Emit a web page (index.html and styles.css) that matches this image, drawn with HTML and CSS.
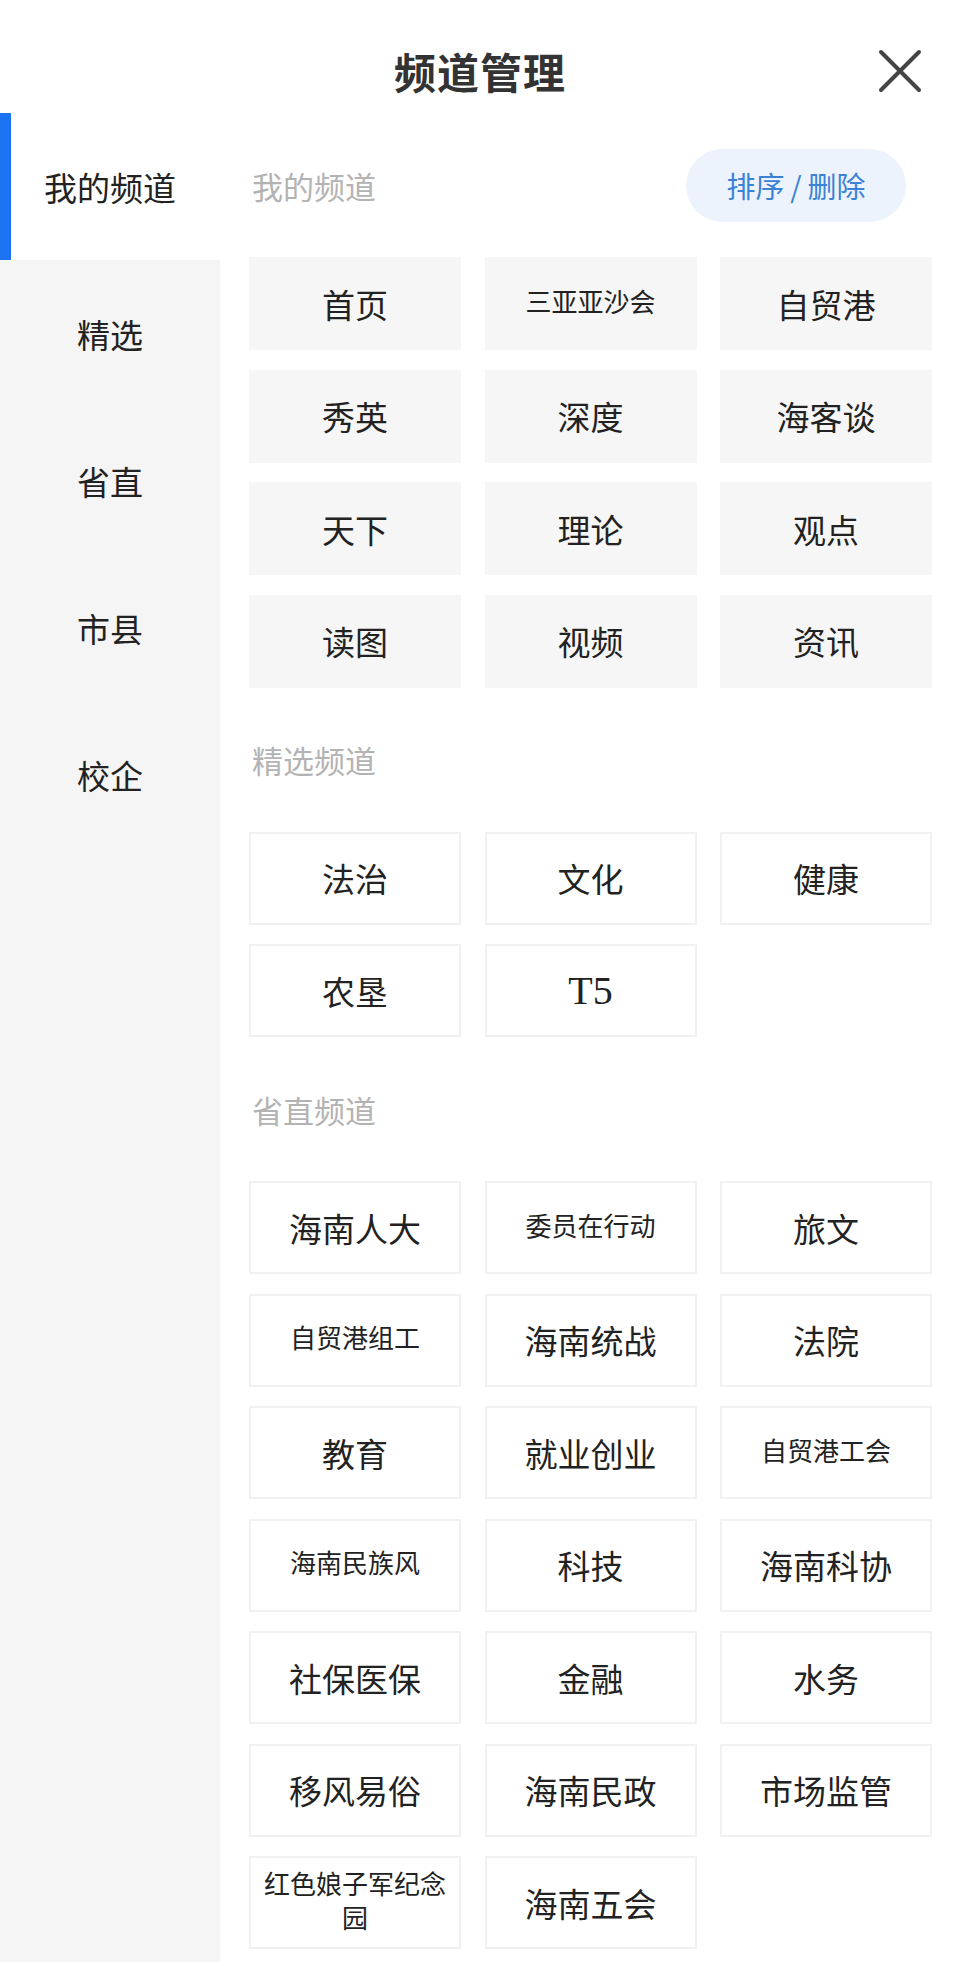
FILE: index.html
```html
<!DOCTYPE html>
<html lang="zh-CN">
<head>
  <meta charset="UTF-8">
  <title>频道管理</title>
  <link rel="stylesheet" href="styles.css">
</head>
<body>
  <header class="topbar">
    <span></span>
    <h1>频道管理</h1>
    <button class="close" aria-label="关闭">
      <svg width="44" height="44" viewBox="0 0 44 44">
        <path d="M3 3 L41 41 M41 3 L3 41" stroke="#444" stroke-width="4" stroke-linecap="round" fill="none"/>
      </svg>
    </button>
  </header>

  <div class="layout">
    <nav class="sidebar">
      <a class="nav-item active">我的频道</a>
      <a class="nav-item">精选</a>
      <a class="nav-item">省直</a>
      <a class="nav-item">市县</a>
      <a class="nav-item">校企</a>
    </nav>

    <main class="content">
      <section>
        <div class="section-head">
          <h2>我的频道</h2>
          <button class="edit-btn">排序&thinsp;/&thinsp;删除</button>
        </div>
        <div class="grid mine">
          <div class="tile">首页</div>
          <div class="tile small">三亚亚沙会</div>
          <div class="tile">自贸港</div>
          <div class="tile">秀英</div>
          <div class="tile">深度</div>
          <div class="tile">海客谈</div>
          <div class="tile">天下</div>
          <div class="tile">理论</div>
          <div class="tile">观点</div>
          <div class="tile">读图</div>
          <div class="tile">视频</div>
          <div class="tile">资讯</div>
        </div>
      </section>

      <section>
        <div class="section-head">
          <h2>精选频道</h2>
        </div>
        <div class="grid">
          <div class="tile">法治</div>
          <div class="tile">文化</div>
          <div class="tile">健康</div>
          <div class="tile">农垦</div>
          <div class="tile latin">T5</div>
        </div>
      </section>

      <section>
        <div class="section-head">
          <h2>省直频道</h2>
        </div>
        <div class="grid">
          <div class="tile">海南人大</div>
          <div class="tile small">委员在行动</div>
          <div class="tile">旅文</div>
          <div class="tile small">自贸港组工</div>
          <div class="tile">海南统战</div>
          <div class="tile">法院</div>
          <div class="tile">教育</div>
          <div class="tile">就业创业</div>
          <div class="tile small">自贸港工会</div>
          <div class="tile small">海南民族风</div>
          <div class="tile">科技</div>
          <div class="tile">海南科协</div>
          <div class="tile">社保医保</div>
          <div class="tile">金融</div>
          <div class="tile">水务</div>
          <div class="tile">移风易俗</div>
          <div class="tile">海南民政</div>
          <div class="tile">市场监管</div>
          <div class="tile small">红色娘子军纪念园</div>
          <div class="tile">海南五会</div>
        </div>
      </section>
    </main>
  </div>
</body>
</html>
```

FILE: styles.css
```css
body {
  margin: 0;
  padding: 0;
  background-color: #ffffff;
  font-family: "Noto Sans CJK SC", sans-serif;
  color: #222;
}
.topbar {
  display: grid;
  grid-template-columns: 1fr auto 1fr;
  align-items: center;
  height: 113px;
  padding-top: 28px;
  box-sizing: border-box;
}
.topbar h1 {
  margin: 0;
  font-size: 42px;
  font-weight: 700;
  color: #333;
  letter-spacing: 1px;
}
.close {
  justify-self: end;
  margin-right: 38px;
  margin-top: 0;
  padding: 0;
  border: none;
  background: none;
  display: flex;
}
.layout {
  display: flex;
}
.sidebar {
  width: 220px;
  flex-shrink: 0;
  background-color: #f5f5f5;
  display: flex;
  flex-direction: column;
}
.nav-item {
  height: 147px;
  display: flex;
  align-items: center;
  justify-content: center;
  font-size: 33px;
  color: #222;
}
.nav-item.active {
  background-color: #ffffff;
  box-shadow: inset 11px 0 0 #1c74f2;
}
.content {
  flex: 1;
  padding: 0 28px 13px 29px;
}
.section-head {
  height: 144px;
  display: flex;
  align-items: center;
  justify-content: space-between;
}
.section-head h2 {
  margin: 0 0 0 3px;
  font-size: 31px;
  font-weight: 400;
  color: #b3b3b3;
}
.edit-btn {
  margin-right: 26px;
  width: 220px;
  height: 73px;
  border: none;
  border-radius: 37px;
  background-color: #ecf3fd;
  color: #3b82d4;
  font-family: "Noto Sans CJK SC", sans-serif;
  font-size: 29px;
  padding: 0;
}
.grid {
  display: grid;
  grid-template-columns: repeat(3, 1fr);
  gap: 19.5px 23.5px;
}
.tile {
  height: 93px;
  box-sizing: border-box;
  display: flex;
  align-items: center;
  justify-content: center;
  text-align: center;
  padding: 0 10px;
  background-color: #ffffff;
  border: 2px solid #f1f1f1;
  font-family: "Liberation Serif", "Noto Sans CJK SC", serif;
  font-size: 33px;
  color: #222;
}
.grid.mine .tile {
  background-color: #f6f6f6;
  border-color: #f6f6f6;
}
.tile.small {
  font-size: 26px;
  line-height: 34px;
}
.tile.latin {
  font-size: 40px;
}
```
